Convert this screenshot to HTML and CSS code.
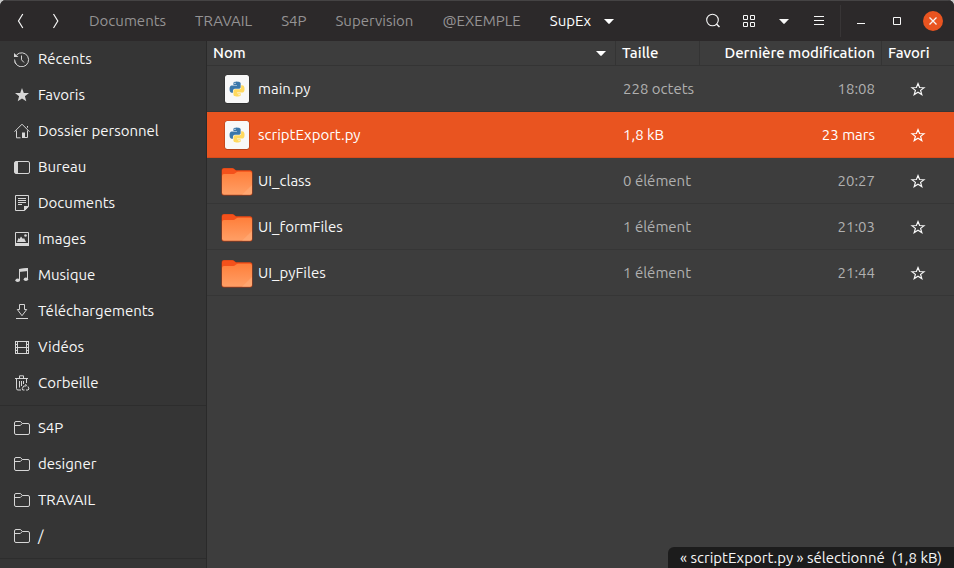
FILE: index.html
```html
<!DOCTYPE html>
<html lang="fr">
<head>
<meta charset="utf-8">
<meta name="viewport" content="width=device-width, initial-scale=1">
<title>SupEx</title>
<link rel="stylesheet" href="styles.css">
</head>
<body>
<svg class="sprite" aria-hidden="true">
  <defs>
    <linearGradient id="folder-fill" x1="0" y1="0" x2="0" y2="1">
      <stop offset="0" stop-color="#ff7f3b"/>
      <stop offset="1" stop-color="#ff9f66"/>
    </linearGradient>
    <path id="snake" d="M14.25.18l.9.2.73.26.59.3.45.32.34.34.25.34.16.33.1.3.04.26.02.2-.01.13V8.5l-.05.63-.13.55-.21.46-.26.38-.3.31-.33.25-.35.19-.35.14-.33.1-.3.07-.26.04-.21.02H8.77l-.69.05-.59.14-.5.22-.41.27-.33.32-.27.35-.2.36-.15.37-.1.35-.07.32-.04.27-.02.21v3.06H3.17l-.21-.03-.28-.07-.32-.12-.35-.18-.36-.26-.36-.36-.35-.46-.32-.59-.28-.73-.21-.88-.14-1.05-.05-1.23.06-1.22.16-1.04.24-.87.32-.71.36-.57.4-.44.42-.33.42-.24.4-.16.36-.1.32-.05.24-.01h.16l.06.01h8.16v-.83H6.18l-.01-2.75-.02-.37.05-.34.11-.31.17-.28.25-.26.31-.23.38-.2.44-.18.51-.15.58-.12.64-.1.71-.06.77-.04.84-.02 1.27.05zm-6.3 1.98l-.23.33-.08.41.08.41.23.34.33.22.41.09.41-.09.33-.22.23-.34.08-.41-.08-.41-.23-.33-.33-.22-.41-.09-.41.09z"/>
  </defs>
  <symbol id="i-python" viewBox="0 0 32 32">
    <rect x="3.5" y="1.8" width="25" height="29" rx="3" fill="#000" opacity=".28"/>
    <rect x="4" y="2" width="24" height="28" rx="2.500" fill="#f8f8f8"/>
    <g transform="translate(8.600 8.600) scale(.62)">
      <use href="#snake" fill="#3a77aa"/>
      <use href="#snake" fill="#ffd95e" transform="rotate(180 12 12)"/>
    </g>
  </symbol>
  <symbol id="i-bigfolder" viewBox="0 0 32 32">
    <path d="M.5 7V5.500Q.5 3 3 3h8.500q1 0 1.700.7L15 5.200h14q2.500 0 2.500 2.500V28q0 2.500-2.500 2.500H3Q.5 30.500.5 28z" fill="#a93a16"/>
    <path d="M1 7V5.500Q1 3.300 3 3.300h8.300q1 0 1.700.7l2 1.600h14q2 0 2 2V14H1z" fill="#f4511b"/>
    <path d="M1 11q0-2 2-2h9.500q1 0 1.700-.7L15.500 7.300q.6-.5 1.500-.5h12q2 0 2 2V27.700q0 2-2 2H3q-2 0-2-2z" fill="url(#folder-fill)"/>
    <path d="M31 20v7.700q0 2-2 2h-8z" fill="#ffb383" opacity=".45"/>
  </symbol>
  <symbol id="i-recent" viewBox="0 0 16 16">
    <path d="M2.500 4A7 7 0 1 1 .6 8.500M.9 10.500A7 7 0 0 0 2 13" fill="none" stroke="currentColor"/>
    <path d="M0 2v4h4.500z" fill="currentColor"/>
    <path d="M7.500 4.500v4.300l2.500 2.700" fill="none" stroke="currentColor"/>
  </symbol>
  <symbol id="i-favorite" viewBox="0 0 16 16">
    <path d="M8 1l1.800 4.900 5.200.2-4.100 3.200 1.400 5L8 11.400l-4.300 2.900 1.400-5L1 6.100l5.200-.2z" fill="currentColor"/>
  </symbol>
  <symbol id="i-home" viewBox="0 0 16 16">
    <path d="M.5 8.700L8 1.200l7.500 7.500M13.500 4.700V3M2.500 7.500v7.300h4M11 14.500h2.500V7.500" fill="none" stroke="currentColor"/>
    <path d="M8 9.500h3V15H8z" fill="currentColor"/>
  </symbol>
  <symbol id="i-desktop" viewBox="0 0 16 16">
    <rect x=".5" y="2.500" width="15" height="12" rx="1.500" fill="none" stroke="currentColor"/>
    <path d="M1 3h3v11H1z" fill="currentColor"/>
  </symbol>
  <symbol id="i-document" viewBox="0 0 16 16">
    <path d="M1.500.5h13v11l-4 4h-9z" fill="none" stroke="currentColor"/>
    <path d="M4 3.500h8M4 5.500h8M4 7.500h8M4 9.500h4" stroke="currentColor"/>
    <path d="M10 11h4.500v1L11 15.500h-1z" fill="currentColor"/>
  </symbol>
  <symbol id="i-image" viewBox="0 0 16 16">
    <path d="M1.500 1.500h13v12h-13zM1 13h14" fill="none" stroke="currentColor"/>
    <path d="M1 12h14v3H1zM3 11l1.500-4 1 1L7 5.500 9 8l1-1 2 4z" fill="currentColor"/>
    <circle cx="11.500" cy="4.500" r="1.300" fill="currentColor"/>
  </symbol>
  <symbol id="i-music" viewBox="0 0 16 16">
    <path d="M5.500 13V2.500l8-1V12" fill="none" stroke="currentColor"/>
    <path d="M5 2l9-1v3L5 5z" fill="currentColor"/>
    <ellipse cx="3.700" cy="13.300" rx="2.300" ry="1.800" fill="currentColor"/>
    <ellipse cx="11.900" cy="12.300" rx="2.200" ry="1.800" fill="currentColor"/>
  </symbol>
  <symbol id="i-download" viewBox="0 0 16 16">
    <path d="M5.500 1.500h5v5h2.200L8 12.700 3.300 6.500h2.200zM2 15.500h12" fill="none" stroke="currentColor"/>
  </symbol>
  <symbol id="i-video" viewBox="0 0 16 16">
    <path d="M3.500 2.500h9v12h-9zM3.500 8.500h9" fill="none" stroke="currentColor"/>
    <path d="M1.500 2v13M14.500 2v13" stroke="currentColor" stroke-width="1"/>
    <path d="M1 2.500h3M1 5.500h3M1 8.500h3M1 11.500h3M1 14.500h3M12 2.500h3M12 5.500h3M12 8.500h3M12 11.500h3M12 14.500h3" stroke="currentColor"/>
  </symbol>
  <symbol id="i-trash" viewBox="0 0 16 16">
    <path d="M1 3.500h13M5.500 3V.8h4V3M2.500 4v9.500q0 1.500 1.500 1.500h3M12.500 4v4M5.500 6v6.500M7.500 6v5M9.500 6v3" fill="none" stroke="currentColor"/>
    <path d="M11.500 9l1 2M14 11.500l1 2.500-1 1h-2M10.500 15h-1.800l-.4-1.500 1.400-2.500h2.500" fill="none" stroke="currentColor"/>
  </symbol>
  <symbol id="i-folder" viewBox="0 0 16 16">
    <path d="M.5 3Q.5 1.500 2 1.500h4.500L8.300 3.500H14q1.500 0 1.500 1.500v8q0 1.500-1.500 1.500H2Q.5 14.500.5 13zM.5 5.500h5.800L8.300 3.500" fill="none" stroke="currentColor"/>
  </symbol>
  <symbol id="i-star" viewBox="0 0 16 16">
    <path d="M8 2.500l1.600 4 4.400.2-3.400 2.700 1.200 4.200L8 11.200l-3.800 2.400 1.200-4.200L2 6.700l4.400-.2z" fill="none" stroke="currentColor" stroke-width="1.200"/>
  </symbol>
  <symbol id="i-back" viewBox="0 0 16 16"><path d="M9.800 1L5.500 8l4.300 7" fill="none" stroke="currentColor" stroke-width="1.200"/></symbol>
  <symbol id="i-forward" viewBox="0 0 16 16"><path d="M4.500 1l4.300 7-4.300 7" fill="none" stroke="currentColor" stroke-width="1.200"/></symbol>
  <symbol id="i-caret" viewBox="0 0 16 16"><path d="M3 6h10l-4.300 4.600q-.7.600-1.400 0z" fill="currentColor"/></symbol>
  <symbol id="i-search" viewBox="0 0 16 16">
    <circle cx="7.500" cy="7" r="5.800" fill="none" stroke="currentColor" stroke-width="1.100"/>
    <path d="M11.500 11l3 3" stroke="currentColor" stroke-width="1.500"/>
  </symbol>
  <symbol id="i-grid" viewBox="0 0 16 16">
    <path d="M2.500 2.500h4v4h-4zM9.500 2.500h4v4h-4zM2.500 9.500h4v4h-4zM9.500 9.500h4v4h-4z" fill="none" stroke="currentColor"/>
  </symbol>
  <symbol id="i-menu" viewBox="0 0 16 16"><path d="M3 3.500h10M3 7.500h10M3 11.500h10" stroke="currentColor"/></symbol>
  <symbol id="i-minimize" viewBox="0 0 16 16"><path d="M4 10.500h8" stroke="currentColor"/></symbol>
  <symbol id="i-maximize" viewBox="0 0 16 16"><path d="M4.500 4.500h7v7h-7z" fill="none" stroke="currentColor"/></symbol>
  <symbol id="i-close" viewBox="0 0 16 16"><path d="M4.500 4.500l7 7M11.500 4.500l-7 7" stroke="currentColor" stroke-width="1.300"/></symbol>
</svg>

<div class="window">
  <header class="titlebar">
    <div class="history">
      <button class="tool" aria-label="Précédent"><svg class="icon"><use href="#i-back"/></svg></button>
      <button class="tool" aria-label="Suivant"><svg class="icon"><use href="#i-forward"/></svg></button>
    </div>
    <nav class="path" aria-label="Chemin">
      <a href="#">Documents</a>
      <a href="#">TRAVAIL</a>
      <a href="#">S4P</a>
      <a href="#">Supervision</a>
      <a href="#">@EXEMPLE</a>
      <a href="#" class="current">SupEx <svg class="icon"><use href="#i-caret"/></svg></a>
    </nav>
    <div class="tools">
      <button class="tool" aria-label="Rechercher"><svg class="icon"><use href="#i-search"/></svg></button>
      <button class="tool" aria-label="Affichage en grille"><svg class="icon"><use href="#i-grid"/></svg></button>
      <button class="tool narrow" aria-label="Options d’affichage"><svg class="icon"><use href="#i-caret"/></svg></button>
      <button class="tool" aria-label="Menu"><svg class="icon"><use href="#i-menu"/></svg></button>
    </div>
    <div class="controls">
      <button class="tool" aria-label="Réduire"><svg class="icon"><use href="#i-minimize"/></svg></button>
      <button class="tool" aria-label="Agrandir"><svg class="icon"><use href="#i-maximize"/></svg></button>
      <button class="tool" aria-label="Fermer"><span class="close"><svg class="icon"><use href="#i-close"/></svg></span></button>
    </div>
  </header>

  <div class="body">
    <nav class="sidebar" aria-label="Emplacements">
      <ul>
        <li><a href="#"><svg class="icon"><use href="#i-recent"/></svg>Récents</a></li>
        <li><a href="#"><svg class="icon"><use href="#i-favorite"/></svg>Favoris</a></li>
        <li><a href="#"><svg class="icon"><use href="#i-home"/></svg>Dossier personnel</a></li>
        <li><a href="#"><svg class="icon"><use href="#i-desktop"/></svg>Bureau</a></li>
        <li><a href="#"><svg class="icon"><use href="#i-document"/></svg>Documents</a></li>
        <li><a href="#"><svg class="icon"><use href="#i-image"/></svg>Images</a></li>
        <li><a href="#"><svg class="icon"><use href="#i-music"/></svg>Musique</a></li>
        <li><a href="#"><svg class="icon"><use href="#i-download"/></svg>Téléchargements</a></li>
        <li><a href="#"><svg class="icon"><use href="#i-video"/></svg>Vidéos</a></li>
        <li><a href="#"><svg class="icon"><use href="#i-trash"/></svg>Corbeille</a></li>
      </ul>
      <hr>
      <ul>
        <li><a href="#"><svg class="icon"><use href="#i-folder"/></svg>S4P</a></li>
        <li><a href="#"><svg class="icon"><use href="#i-folder"/></svg>designer</a></li>
        <li><a href="#"><svg class="icon"><use href="#i-folder"/></svg>TRAVAIL</a></li>
        <li><a href="#"><svg class="icon"><use href="#i-folder"/></svg>/</a></li>
      </ul>
      <hr>
    </nav>

    <main class="content">
      <table class="files">
        <colgroup><col><col class="col-size"><col class="col-date"><col class="col-star"></colgroup>
        <thead>
          <tr>
            <th aria-sort="ascending"><div class="sort"><span>Nom</span><svg class="icon"><use href="#i-caret"/></svg></div></th>
            <th>Taille</th>
            <th class="date">Dernière modification</th>
            <th>Favori</th>
          </tr>
        </thead>
        <tbody>
          <tr>
            <td><div class="name"><svg class="file-icon"><use href="#i-python"/></svg>main.py</div></td>
            <td class="size">228 octets</td><td class="date">18:08</td>
            <td class="star"><button aria-label="Favori : main.py"><svg class="icon"><use href="#i-star"/></svg></button></td>
          </tr>
          <tr class="selected">
            <td><div class="name"><svg class="file-icon"><use href="#i-python"/></svg>scriptExport.py</div></td>
            <td class="size">1,8 kB</td><td class="date">23 mars</td>
            <td class="star"><button aria-label="Favori : scriptExport.py"><svg class="icon"><use href="#i-star"/></svg></button></td>
          </tr>
          <tr>
            <td><div class="name"><svg class="file-icon"><use href="#i-bigfolder"/></svg>UI_class</div></td>
            <td class="size">0 élément</td><td class="date">20:27</td>
            <td class="star"><button aria-label="Favori : UI_class"><svg class="icon"><use href="#i-star"/></svg></button></td>
          </tr>
          <tr>
            <td><div class="name"><svg class="file-icon"><use href="#i-bigfolder"/></svg>UI_formFiles</div></td>
            <td class="size">1 élément</td><td class="date">21:03</td>
            <td class="star"><button aria-label="Favori : UI_formFiles"><svg class="icon"><use href="#i-star"/></svg></button></td>
          </tr>
          <tr>
            <td><div class="name"><svg class="file-icon"><use href="#i-bigfolder"/></svg>UI_pyFiles</div></td>
            <td class="size">1 élément</td><td class="date">21:44</td>
            <td class="star"><button aria-label="Favori : UI_pyFiles"><svg class="icon"><use href="#i-star"/></svg></button></td>
          </tr>
        </tbody>
      </table>
      <div class="status" role="status">« scriptExport.py » sélectionné&nbsp; (1,8 kB)</div>
    </main>
  </div>
</div>
</body>
</html>
```
FILE: styles.css
```css
* { box-sizing: border-box; }

body {
  margin: 0;
  background: #c8c8c8;
  color: #f7f7f7;
  font: 15px/20px Ubuntu, "Noto Sans", sans-serif;
}

a { color: inherit; text-decoration: none; }

button {
  padding: 0;
  border: 0;
  background: none;
  color: inherit;
  font: inherit;
}

.sprite { position: absolute; width: 0; height: 0; }

.icon { display: block; flex: none; width: 16px; height: 16px; }

.window {
  display: flex;
  flex-direction: column;
  height: 100vh;
  overflow: hidden;
  border-radius: 6px 6px 0 0;
  background: #3d3d3d;
}

.titlebar {
  display: flex;
  flex: none;
  align-items: center;
  height: 41px;
  padding: 0 3px;
  border-top: 1px solid #454344;
  background: #2c292a;
}

.history, .path, .tools, .controls { display: flex; align-items: center; }

.tool {
  display: flex;
  align-items: center;
  justify-content: center;
  width: 36px;
  height: 32px;
}

.tool.narrow { width: 34px; }

.path {
  flex: 1;
  gap: 29px;
  padding-left: 14px;
  color: #959394;
}

.path .current { display: flex; align-items: center; gap: 10px; color: #fff; }

.tools { padding-right: 3px; }

.controls { padding-left: 2px; border-left: 1px solid #383536; }

.close {
  display: flex;
  align-items: center;
  justify-content: center;
  width: 20px;
  height: 20px;
  border-radius: 50%;
  background: #e95420;
}

.body { display: flex; flex: 1; min-height: 0; }

.sidebar {
  flex: none;
  width: 207px;
  overflow: hidden;
  border-right: 1px solid #2a2a2a;
  background: #353535;
}

.sidebar ul { margin: 0; padding: 0; list-style: none; }

.sidebar a {
  display: flex;
  align-items: center;
  gap: 8px;
  height: 36px;
  padding: 0 14px;
}

.sidebar .icon { color: #d6d6d6; }

.sidebar hr { margin: 4px 0; border: 0; border-top: 1px solid #2d2d2d; }

.content { position: relative; flex: 1; min-width: 0; }

.files { width: 100%; border-spacing: 0; table-layout: fixed; }

.col-size { width: 84px; }
.col-date { width: 182px; }
.col-star { width: 72px; }

.files th {
  height: 25px;
  padding: 0 6px;
  border-right: 1px solid #343434;
  border-bottom: 1px solid #343434;
  color: #fff;
  font-weight: 500;
  text-align: left;
  white-space: nowrap;
}

.files th:last-child { border-right: 0; }

.sort { display: flex; align-items: center; justify-content: space-between; }

.files td {
  height: 46px;
  padding: 0 7px;
  border-bottom: 1px solid #363636;
  white-space: nowrap;
}

.files .date { text-align: right; }

.files td.size, .files td.date { color: #b0b0b0; }

.files tr.selected td { border-color: #d64c1c; background: #e95420; color: #fff; }

.name { display: flex; align-items: center; gap: 5px; padding-left: 7px; }

.file-icon { flex: none; width: 32px; height: 32px; }

.star button { display: block; margin: auto; }

.status {
  position: absolute;
  right: 0;
  bottom: 0;
  padding: 1px 12px 0;
  border-radius: 6px 0 0 0;
  background: #1c1c1c;
}
```
